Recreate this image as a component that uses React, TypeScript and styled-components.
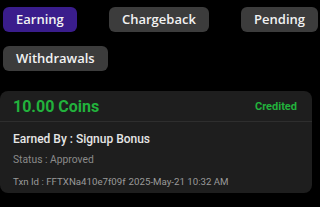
import React from 'react'
import styled, { createGlobalStyle } from 'styled-components'

const Global = createGlobalStyle`
    html, body {
        margin: 0;
        padding: 0;
        background: #000;
    }
    body {
        font-family: Roboto, "Noto Sans", sans-serif;
    }
`

const Page = styled.div`
    width: 320px;
    height: 207px;
    background: #000;
    overflow: hidden;
    padding-top: 7px;
    box-sizing: border-box;
`

const Tabs = styled.div`
    display: flex;
    flex-wrap: wrap;
    justify-content: space-between;
    row-gap: 14px;
    padding: 0 2px 0 3px;
`

const Tab = styled.button<{ $active?: boolean }>`
    height: 25px;
    padding: 0 13px;
    border: none;
    border-radius: 6px;
    background: ${p => (p.$active ? '#3a1d8c' : '#3c3c3c')};
    color: #f2f2f2;
    font-family: "Open Sans", sans-serif;
    font-weight: 600;
    font-size: 13px;
    line-height: 25px;
`

const Card = styled.div`
    margin: 20px 8px 0 0;
    background: #1e1e1e;
    border-radius: 8px;
    overflow: hidden;
`

const CardHead = styled.div`
    display: flex;
    align-items: center;
    justify-content: space-between;
    height: 30px;
    padding: 0 15px 0 13px;
    border-bottom: 1px solid #2e2e2e;
`

const Amount = styled.div`
    color: #22b23c;
    font-weight: 700;
    font-size: 16px;
`

const State = styled.div`
    color: #22b23c;
    font-weight: 700;
    font-size: 11px;
`

const CardBody = styled.div`
    padding: 8px 13px 4px;
    display: flex;
    flex-direction: column;
`

const Title = styled.div`
    color: #e6e6e6;
    font-weight: 500;
    font-size: 12px;
    line-height: 18px;
`

const Meta = styled.div`
    color: #8a8a8a;
    font-size: 10.3px;
    line-height: 14px;
    margin-top: 5px;
`

const Txn = styled(Meta)`
    color: #9a9a9a;
    font-size: 9.7px;
    margin-top: 8px;
`

const Date = styled.span`
    margin-left: 3px;
`

export default function App() {
    return (
        <Page>
            <Global />
            <Tabs>
                <Tab $active>Earning</Tab>
                <Tab>Chargeback</Tab>
                <Tab>Pending</Tab>
                <Tab>Withdrawals</Tab>
            </Tabs>
            <Card>
                <CardHead>
                    <Amount>10.00 Coins</Amount>
                    <State>Credited</State>
                </CardHead>
                <CardBody>
                    <Title>Earned By : Signup Bonus</Title>
                    <Meta>Status : Approved</Meta>
                    <Txn>
                        Txn Id : FFTXNa410e7f09f
                        <Date>2025-May-21 10:32 AM</Date>
                    </Txn>
                </CardBody>
            </Card>
        </Page>
    )
}
